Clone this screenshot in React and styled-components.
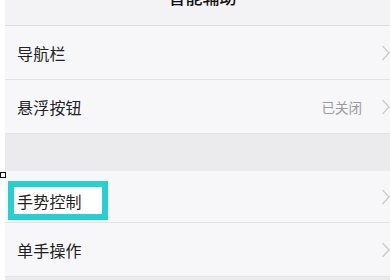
import React from "react";
import styled, { createGlobalStyle } from "styled-components";

const GlobalStyle = createGlobalStyle`
  html, body {
    margin: 0;
    padding: 0;
    background: #ffffff;
  }
  body {
    font-family: "Noto Sans CJK SC", "Noto Sans", sans-serif;
  }
`;

const Page = styled.div`
  width: 390px;
  height: 280px;
  overflow: hidden;
  display: flex;
  background: #ffffff;
`;

const Edge = styled.div`
  width: 5px;
  flex-shrink: 0;
  background: #ffffff;
`;

const Main = styled.div`
  flex: 1;
  display: flex;
  flex-direction: column;
  background: #ebebee;
`;

const Header = styled.div`
  height: 25px;
  flex-shrink: 0;
  overflow: hidden;
  background: #f3f3f5;
  border-bottom: 1px solid #dddde1;
  display: flex;
  justify-content: center;
`;

const Title = styled.div`
  margin-top: -13px;
  padding-left: 10px;
  font-size: 17px;
  line-height: 20px;
  font-weight: 500;
  color: #111;
`;

const Row = styled.div`
  position: relative;
  height: ${(p) => p.$h || 53}px;
  flex-shrink: 0;
  display: flex;
  align-items: center;
  padding-left: 12px;
  background: #f7f7f9;
  border-bottom: 1px solid #e2e2e6;
`;

const Label = styled.div`
  flex: 1;
  font-size: 16px;
  color: #222;
  letter-spacing: 0.2px;
`;

const Marked = styled.div`
  align-self: flex-end;
  margin: 0 0 2px -9px;
  width: 100px;
  height: 39px;
  box-sizing: border-box;
  border: 6px solid #27d0d0;
  background: #ffffff;
  padding-left: 3px;
  display: flex;
  align-items: center;
  font-size: 16px;
  color: #222;
  letter-spacing: 0.2px;
`;

const Spacer = styled.div`
  flex: 1;
`;

const Value = styled.div`
  font-size: 13.5px;
  color: #9a9a9e;
  margin-right: 19px;
`;

const Gap = styled.div`
  height: 37px;
  flex-shrink: 0;
  background: #ebebee;
`;

const Pin = styled.div`
  position: absolute;
  left: -5px;
  top: 1px;
  width: 4px;
  height: 4px;
  border: 1px solid #111;
  background: #fff;
`;

const Chevron = () => (
  <svg width="9" height="16" viewBox="0 0 9 16" style={{ flexShrink: 0 }}>
    <polyline points="1.5,1 8,8 1.5,15" fill="none" stroke="#cacace" strokeWidth="1.3" />
  </svg>
);

export default function App() {
  return (
    <>
      <GlobalStyle />
      <Page>
        <Edge />
        <Main>
          <Header>
            <Title>智能辅助</Title>
          </Header>
          <Row>
            <Label>导航栏</Label>
            <Chevron />
          </Row>
          <Row>
            <Label>悬浮按钮</Label>
            <Value>已关闭</Value>
            <Chevron />
          </Row>
          <Gap />
          <Row $h={51}>
            <Pin />
            <Marked>手势控制</Marked>
            <Spacer />
            <Chevron />
          </Row>
          <Row>
            <Label>单手操作</Label>
            <Chevron />
          </Row>
        </Main>
      </Page>
    </>
  );
}
